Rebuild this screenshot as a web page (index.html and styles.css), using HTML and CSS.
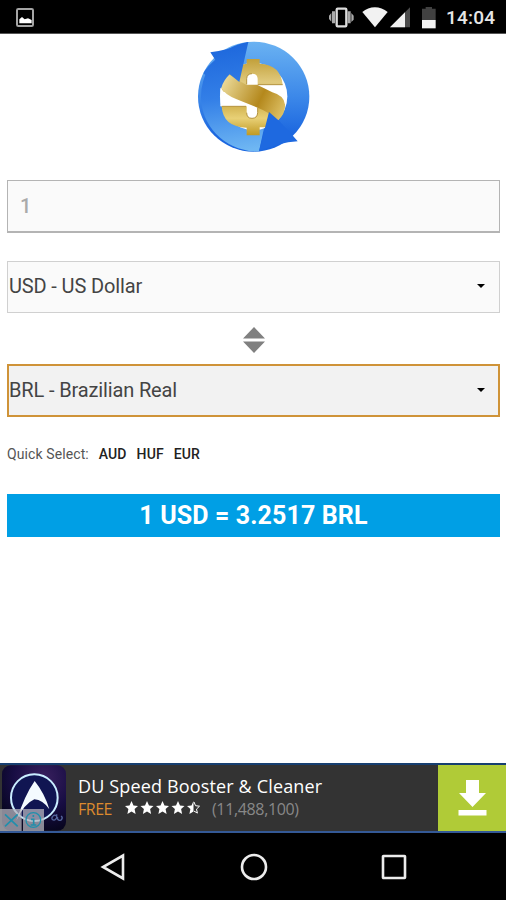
FILE: index.html
```html
<!DOCTYPE html>
<html>
<head>
    <meta charset="UTF-8">
    <title>Currency Converter</title>
    <link rel="stylesheet" href="styles.css">
</head>
<body>
<div class="status">
    <svg class="picture" width="18" height="19" viewBox="0 0 54 57">
        <rect x="3" y="3" width="48" height="51" rx="4" fill="none" stroke="#a5a5a5" stroke-width="6"/>
        <path d="M10 46V34l8-7 8 7 10-3 11 5v10z" fill="#fff"/>
    </svg>
    <svg class="signals" width="110" height="34" viewBox="0 0 330 102">
        <path d="M3 53v-6l7-8v26l-7-8zM12 34h9v36h-9zM59 34h9v36h-9zM70 39l7 8v12l-7 7z" fill="#aaa"/>
        <rect x="26" y="26" width="29" height="53" rx="3" fill="none" stroke="#ddd" stroke-width="7"/>
        <path d="M103 36C124 17 157 17 179 36L141 82z" fill="#f2f2f2"/>
        <path d="M246 22V82H186z" fill="#4c4c4c"/>
        <path d="M231 37V82H186z" fill="#f2f2f2"/>
        <path d="M282 61V26h11v-5h19v5h11v35z" fill="#414141"/>
        <path d="M282 60h41v25h-41z" fill="#f2f2f2"/>
    </svg>
    <span class="time">14:04</span>
</div>

<div class="main">
    <svg class="logo" width="130" height="125" viewBox="0 0 390 375">
        <defs>
            <linearGradient id="right" x1="0" y1="0" x2="0" y2="1">
                <stop offset="0" stop-color="#6ab2f2"/>
                <stop offset=".5" stop-color="#3c88e9"/>
                <stop offset=".85" stop-color="#1b66df"/>
            </linearGradient>
            <linearGradient id="left" gradientUnits="userSpaceOnUse" x1="90" y1="20" x2="140" y2="350">
                <stop offset="0" stop-color="#1c66dc"/>
                <stop offset=".5" stop-color="#337fe7"/>
                <stop offset="1" stop-color="#6fb7f3"/>
            </linearGradient>
            <linearGradient id="gold" gradientUnits="userSpaceOnUse" x1="0" y1="72" x2="0" y2="300">
                <stop offset="0" stop-color="#c2a03a"/>
                <stop offset=".3" stop-color="#e0c97c"/>
                <stop offset=".6" stop-color="#d0b04c"/>
                <stop offset=".78" stop-color="#e8d076"/>
                <stop offset="1" stop-color="#c19a24"/>
            </linearGradient>
            <linearGradient id="band" gradientUnits="userSpaceOnUse" x1="95" y1="140" x2="285" y2="235">
                <stop offset="0" stop-color="#ecdc9c"/>
                <stop offset=".6" stop-color="#b4881c"/>
                <stop offset="1" stop-color="#e0c46a"/>
            </linearGradient>
        </defs>
        <ellipse cx="191" cy="185" rx="167" ry="165" fill="url(#right)"/>
        <path d="M175 21A167 165 0 0 0 207 349L222 280L140 89z" fill="url(#left)"/>
        <circle cx="191" cy="184" r="101" fill="#fff"/>
        <!-- dollar sign -->
        <path d="M170 72h39v14q63 3 69 63h-75v-18q-1-15-17-15-15 0-16 15v40H94q-1-34 23-53 20-29 53-32z" fill="url(#gold)"/>
        <path d="M91 158Q112 190 168 208V214H91z" fill="#fff"/>
        <path d="M95 214h75v19q1 17 16 17t17-17v-34l82 8q-1 27-23 50l-20 20h-33v24h-39v-23Q99 277 95 214z" fill="url(#gold)"/>
        <path d="M117 119Q91 138 95 160q9 19 45 33l63 25q37 14 60 39 23-20 22-48-2-27-38-37l-46-23h-33z" fill="url(#band)"/>
        <path d="M203 149h75M95 214h73M203 218v15q-1 17-17 17t-16-17M170 148v-17q1-15 16-15" fill="none" stroke="#b5933f" stroke-width="3"/>
        <!-- arrows -->
        <path d="M61 52Q115 45 175 21L148 141 119 118Q101 135 94 158L40 115Q51 94 76 75z" fill="url(#left)"/>
        <path d="M323 319Q266 323 207 349L237 231 267 257 306 299z" fill="#1e69e0"/>
    </svg>

    <div class="field amount">1</div>
    <div class="field select">USD - US Dollar<i class="caret"></i></div>
    <svg class="swap" width="22" height="26" viewBox="0 0 22 26">
        <path d="M11 0L22 11.500H0zM0 14.500H22L11 26z" fill="#808080"/>
    </svg>
    <div class="field select active">BRL - Brazilian Real<i class="caret"></i></div>
    <div class="quick">
        <span class="label">Quick Select:</span>
        <b>AUD</b>
        <b>HUF</b>
        <b>EUR</b>
    </div>
    <div class="result">1 USD = 3.2517 BRL</div>
</div>

<div class="ad">
    <div class="app">
        <svg width="66" height="68" viewBox="0 0 198 204">
            <defs>
                <radialGradient id="night" cx=".65" cy=".2" r=".8">
                    <stop offset="0" stop-color="#39205f"/>
                    <stop offset=".6" stop-color="#170d43"/>
                    <stop offset="1" stop-color="#080620"/>
                </radialGradient>
            </defs>
            <rect x="6" y="4" width="192" height="196" rx="26" fill="url(#night)"/>
            <circle cx="103" cy="101" r="70" fill="#101552" stroke="#c9edff" stroke-width="6"/>
            <path d="M49 170Q75 92 104 51Q134 88 148 136Q128 107 103 106Q73 119 49 170z" fill="#f4fbff"/>
            <path d="M170 151v13M159 157a6 6 0 1 0 8 8a6 6 0 1 0-8-8M173 159a7 7 0 1 0 10-3" fill="none" stroke="#54659c" stroke-width="4"/>
        </svg>
        <!-- ad choices -->
        <svg class="choices" width="44" height="22" viewBox="0 0 132 66">
            <path d="M0 0H65V66H0zM69 0H132V66H69z" fill="#b4b4bd" fill-opacity=".75"/>
            <path d="M15 16L53 52M53 16L15 52" stroke="#218fac" stroke-width="5"/>
            <circle cx="100" cy="33" r="22" fill="none" stroke="#218fac" stroke-width="4"/>
            <path d="M100 18v6M93 31h8v17M92 48h17" fill="none" stroke="#218fac" stroke-width="5"/>
        </svg>
    </div>
    <div class="info">
        <div class="title">DU Speed Booster &amp; Cleaner</div>
        <div class="meta">
            <span class="free">FREE</span>
            <svg class="stars" width="76" height="14" viewBox="0 0 76 14">
                <defs>
                    <path id="star" d="M6.500 0l2 4.400 4.500.5-3.400 3.200 1 4.800-4.100-2.500-4.100 2.500 1-4.800L0 4.900l4.500-.5z"/>
                </defs>
                <g fill="#fff">
                    <use href="#star"/>
                    <use href="#star" x="15.5"/>
                    <use href="#star" x="31"/>
                    <use href="#star" x="46.5"/>
                    <path d="M68.500 0v10.400l-4.100 2.500 1-4.800L62 4.900l4.500-.5z"/>
                </g>
                <path d="M69 1l1.500 3.700 4 .5-3 2.900.9 4-3.400-2" fill="none" stroke="#fff"/>
            </svg>
            <span class="count">(11,488,100)</span>
        </div>
    </div>
    <div class="download">
        <svg width="29" height="36" viewBox="0 0 29 36">
            <path d="M8 0H21V13H28L14.500 27L1 13H8zM.5 30H28.500V35.500H.5z" fill="#fff"/>
        </svg>
    </div>
</div>

<div class="nav">
    <svg width="26" height="28" viewBox="0 0 26 28"><path d="M23 2.500V25.500L3 14z"/></svg>
    <svg width="28" height="28" viewBox="0 0 28 28"><circle cx="14" cy="14" r="12"/></svg>
    <svg width="26" height="26" viewBox="0 0 26 26"><rect x="2" y="2" width="22" height="22" rx=".5"/></svg>
</div>
</body>
</html>
```
FILE: styles.css
```css
* {
    margin: 0;
    padding: 0;
    box-sizing: border-box;
}

svg {
    display: block;
    flex-shrink: 0;
}

body {
    display: flex;
    flex-direction: column;
    width: 506px;
    height: 900px;
    overflow: hidden;
    background: #fff;
    font-family: Roboto, "Liberation Sans", sans-serif;
}

.status {
    display: flex;
    height: 34px;
    background: #000;
    border-bottom: 1px solid #555;
}

.picture {
    margin: 8px 0 0 16px;
}

.signals {
    margin-left: 294px;
}

.time {
    margin-left: 8px;
    line-height: 36px;
    font-size: 19px;
    font-weight: 500;
    letter-spacing: .2px;
    color: #e6e6e6;
    white-space: nowrap;
}

.main {
    flex: 1;
    padding: 1px 6px 0 7px;
}

.logo {
    margin: 0 0 20px 183px;
}

.field {
    display: flex;
    align-items: center;
    justify-content: space-between;
    height: 53px;
    border: 1px solid #d0d0d0;
    background: #fafafa;
    font-size: 20px;
    color: #444;
}

.amount {
    margin-bottom: 28px;
    padding-left: 12px;
    border-color: #b4b4b4;
    border-bottom-width: 2px;
    font-weight: 500;
    color: #aaa;
}

.select {
    height: 52px;
    padding: 0 14px 2px 1px;
    letter-spacing: -.14px;
}

.active {
    height: 53px;
    border: 2px solid #cf9338;
    background: #f2f2f2;
    padding: 0 13px 2px 0;
}

.caret {
    border: 4px solid transparent;
    border-top: 4px solid #000;
    border-bottom: 0;
}

.swap {
    margin: 14px auto 11px 236px;
}

.quick {
    display: flex;
    gap: 10px;
    margin-top: 27px;
    height: 20px;
    line-height: 20px;
    font-size: 14px;
    letter-spacing: .1px;
    color: #222;
}

.quick .label {
    color: #555;
}

.quick b {
    font-weight: 500;
}

.result {
    height: 43px;
    margin-top: 30px;
    background: #009fe5;
    line-height: 43px;
    text-align: center;
    font-size: 25px;
    font-weight: 700;
    letter-spacing: .12px;
    color: #fff;
}

.ad {
    display: flex;
    height: 70px;
    border-top: 2px solid #173f70;
    border-bottom: 2px solid #345996;
    background: #333;
}

.app {
    position: relative;
    width: 66px;
    margin-top: -1px;
}

.choices {
    position: absolute;
    left: 0;
    bottom: 0;
}

.info {
    width: 372px;
    padding: 9px 0 0 12px;
    font-family: "Open Sans", "Noto Sans", sans-serif;
}

.title {
    height: 25px;
    line-height: 25px;
    font-size: 18px;
    letter-spacing: .15px;
    color: #fff;
}

.meta {
    display: flex;
    height: 20px;
    line-height: 20px;
    font-size: 16px;
}

.free {
    width: 47px;
    letter-spacing: -.5px;
    color: #dc8a2e;
}

.stars {
    margin-top: 2px;
}

.count {
    margin-left: 11px;
    letter-spacing: -.35px;
    color: #888;
}

.download {
    display: flex;
    align-items: center;
    justify-content: center;
    width: 68px;
    background: #b0cb37;
}

.nav {
    display: flex;
    align-items: center;
    justify-content: space-between;
    height: 67px;
    padding: 0 99px 0 100px;
    background: #000;
    fill: none;
    stroke: #ececec;
    stroke-width: 2.6;
}
```
